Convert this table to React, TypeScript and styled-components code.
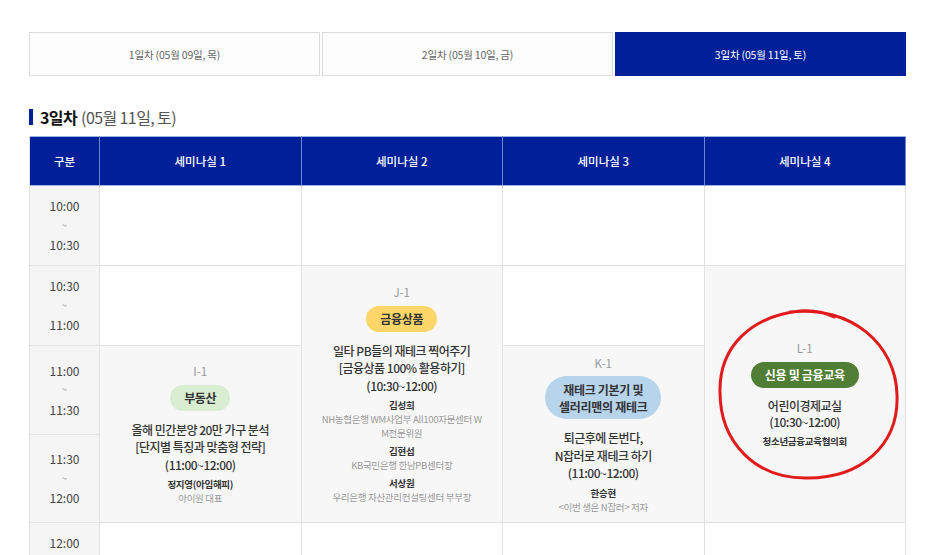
import styled, { createGlobalStyle } from "styled-components";

const GlobalStyle = createGlobalStyle`
  html, body {
    margin: 0;
    padding: 0;
    overflow: hidden;
    background: #fff;
  }
  body {
    font-family: "Noto Sans CJK KR", "Noto Sans", sans-serif;
    color: #333;
  }
`;

type Tone = "yellow" | "mint" | "sky" | "green";

interface Speaker {
  name: string;
  desc?: string[];
}
interface SessionType {
  code: string;
  tag: string[];
  tone: Tone;
  title: string[];
  speakers: Speaker[];
  col: number;
  row: number;
  span: number;
}

const badgeColors: Record<Tone, { bg: string; fg: string }> = {
  yellow: { bg: "#fcd669", fg: "#333" },
  mint: { bg: "#d9edd1", fg: "#333" },
  sky: { bg: "#b7d4ed", fg: "#333" },
  green: { bg: "#4f7e34", fg: "#fff" },
};

const Page = styled.div`
  position: relative;
  width: 877px;
  padding: 32px 0 0 29px;
`;

const Tabs = styled.div`
  display: grid;
  grid-template-columns: repeat(3, 1fr);
  gap: 2px;
`;

const Tab = styled.button<{ $active?: boolean }>`
  height: 44px;
  padding: 0;
  border: 1px solid ${(p) => (p.$active ? "#00209a" : "#dcdcdc")};
  background: ${(p) => (p.$active ? "#00209a" : "#fdfdfd")};
  color: ${(p) => (p.$active ? "#fff" : "#666")};
  font-family: inherit;
  font-size: 10.5px;
  letter-spacing: -0.2px;
`;

const DayTitle = styled.h2`
  display: flex;
  align-items: center;
  height: 24px;
  margin: 29px 0 7px;
  font-size: 16px;
  font-weight: 400;
  color: #555;
  letter-spacing: -0.6px;
  &:before {
    content: "";
    width: 4px;
    height: 16px;
    margin-right: 7px;
    background: #00209a;
  }
  strong {
    font-weight: 700;
    color: #111;
    margin-right: 4px;
  }
`;

const Schedule = styled.div`
  display: grid;
  grid-template-columns: 70px repeat(4, 1fr);
  grid-template-rows: 50px 80px 80px 89px 88px 80px;
  border-left: 1px solid #e2e2e2;
`;

const HeadCell = styled.div`
  display: flex;
  align-items: center;
  justify-content: center;
  background: #00209a;
  border-right: 1px solid #6d86d2;
  border-top: 1px solid #9fb0e4;
  border-bottom: 1px solid #9fb0e4;
  color: #fff;
  font-size: 11.5px;
  font-weight: 500;
  &:last-child {
    border-right-color: #9fb0e4;
  }
`;

const Cell = styled.div<{ $col: number; $row: number; $span?: number; $filled?: boolean }>`
  grid-column: ${(p) => p.$col};
  grid-row: ${(p) => p.$row} / span ${(p) => p.$span ?? 1};
  display: flex;
  align-items: center;
  justify-content: center;
  background: ${(p) => (p.$filled ? "#f7f7f7" : "#fff")};
  border-right: 1px solid #e2e2e2;
  border-bottom: 1px solid #e2e2e2;
`;

const TimeCell = styled(Cell)`
  flex-direction: column;
  background: #f5f5f5;
  font-size: 12px;
  line-height: 19.5px;
  color: #444;
  span {
    font-size: 9px;
    color: #888;
  }
`;

const Session = styled.div`
  display: flex;
  flex-direction: column;
  align-items: center;
  padding: 0 14px;
  text-align: center;
`;

const Code = styled.span`
  font-size: 11.5px;
  line-height: 17px;
  color: #999;
`;

const Badge = styled.span<{ $tone: Tone }>`
  margin-top: 4.5px;
  padding: 4.5px 14px;
  border-radius: 22px;
  background: ${(p) => badgeColors[p.$tone].bg};
  color: ${(p) => badgeColors[p.$tone].fg};
  font-size: 12px;
  font-weight: 700;
  line-height: 17px;
  letter-spacing: -0.3px;
`;

const SessionTitle = styled.p<{ $tight?: boolean }>`
  margin: 10px 0 0;
  font-size: 12px;
  font-weight: 500;
  line-height: ${(p) => (p.$tight ? "16px" : "17.5px")};
  color: #333;
  letter-spacing: -0.5px;
`;

const SpeakerBox = styled.div`
  margin-top: 4px;
  font-size: 9.5px;
  line-height: 14px;
  letter-spacing: -0.3px;
  strong {
    display: block;
    font-weight: 700;
    color: #333;
  }
  p {
    margin: 0;
    color: #999;
  }
`;

const Annotation = styled.svg`
  position: absolute;
  left: 0;
  top: 0;
  pointer-events: none;
`;

const days = [
  { label: "1일차 (05월 09일, 목)" },
  { label: "2일차 (05월 10일, 금)" },
  { label: "3일차 (05월 11일, 토)", active: true },
];

const rooms = ["세미나실 1", "세미나실 2", "세미나실 3", "세미나실 4"];

const times = [
  ["10:00", "10:30"],
  ["10:30", "11:00"],
  ["11:00", "11:30"],
  ["11:30", "12:00"],
  ["12:00", "12:30"],
];

const sessions: SessionType[] = [
  {
    code: "I-1",
    tag: ["부동산"],
    tone: "mint",
    title: ["올해 민간분양 20만 가구 분석", "[단지별 특징과 맞춤형 전략]", "(11:00~12:00)"],
    speakers: [{ name: "정지영(아임해피)", desc: ["아이원 대표"] }],
    col: 2,
    row: 4,
    span: 2,
  },
  {
    code: "J-1",
    tag: ["금융상품"],
    tone: "yellow",
    title: ["일타 PB들의 재테크 찍어주기", "[금융상품 100% 활용하기]", "(10:30~12:00)"],
    speakers: [
      { name: "김성희", desc: ["NH농협은행 WM사업부 All100자문센터 W", "M전문위원"] },
      { name: "김현섭", desc: ["KB국민은행 한남PB센터장"] },
      { name: "서상원", desc: ["우리은행 자산관리컨설팅센터 부부장"] },
    ],
    col: 3,
    row: 3,
    span: 3,
  },
  {
    code: "K-1",
    tag: ["재테크 기본기 및", "셀러리맨의 재테크"],
    tone: "sky",
    title: ["퇴근후에 돈번다,", "N잡러로 재테크 하기", "(11:00~12:00)"],
    speakers: [{ name: "한승현", desc: ["<이번 생은 N잡러> 저자"] }],
    col: 4,
    row: 4,
    span: 2,
  },
  {
    code: "L-1",
    tag: ["신용 및 금융교육"],
    tone: "green",
    title: ["어린이경제교실", "(10:30~12:00)"],
    speakers: [{ name: "청소년금융교육협의회" }],
    col: 5,
    row: 3,
    span: 3,
  },
];

// 세션이 차지하지 않는 빈 칸
const emptyCells: Array<[number, number]> = [
  [2, 2], [3, 2], [4, 2], [5, 2],
  [2, 3], [4, 3],
  [2, 6], [3, 6], [4, 6], [5, 6],
];

export default function App() {
  return (
    <>
      <GlobalStyle />
      <Page>
        <Tabs>
          {days.map((d) => (
            <Tab key={d.label} $active={d.active}>
              {d.label}
            </Tab>
          ))}
        </Tabs>

        <DayTitle>
          <strong>3일차</strong>(05월 11일, 토)
        </DayTitle>

        <Schedule>
          <HeadCell>구분</HeadCell>
          {rooms.map((r) => (
            <HeadCell key={r}>{r}</HeadCell>
          ))}

          {times.map(([from, to], idx) => (
            <TimeCell key={from + idx} $col={1} $row={idx + 2}>
              {from}
              <span>~</span>
              {to}
            </TimeCell>
          ))}

          {emptyCells.map(([c, r]) => (
            <Cell key={`${c}-${r}`} $col={c} $row={r} />
          ))}

          {sessions.map((s) => (
            <Cell key={s.code} $col={s.col} $row={s.row} $span={s.span} $filled>
              <Session>
                <Code>{s.code}</Code>
                <Badge $tone={s.tone}>
                  {s.tag.map((t, i) => (
                    <span key={i}>
                      {i > 0 && <br />}
                      {t}
                    </span>
                  ))}
                </Badge>
                <SessionTitle $tight={s.title.length < 3}>
                  {s.title.map((t, i) => (
                    <span key={i}>
                      {i > 0 && <br />}
                      {t}
                    </span>
                  ))}
                </SessionTitle>
                {s.speakers.map((sp) => (
                  <SpeakerBox key={sp.name}>
                    <strong>{sp.name}</strong>
                    {sp.desc?.map((d) => (
                      <p key={d}>{d}</p>
                    ))}
                  </SpeakerBox>
                ))}
              </Session>
            </Cell>
          ))}
        </Schedule>

        <Annotation width="936" height="555" viewBox="0 0 936 555">
          <path
            d="M 790 312 C 852 305, 896 345, 897 395 C 899 446, 860 478, 808 478 C 755 479, 720 442, 720 392 C 719 346, 752 316, 800 311 C 815 310, 826 313, 834 317"
            fill="none"
            stroke="#e11b1b"
            strokeWidth="3"
            strokeLinecap="round"
          />
        </Annotation>
      </Page>
    </>
  );
}
